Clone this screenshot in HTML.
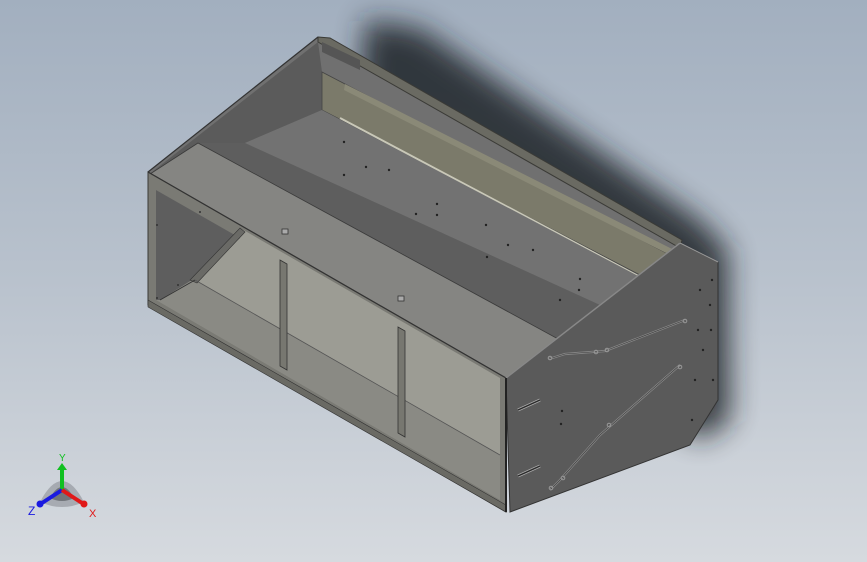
<!DOCTYPE html>
<html><head><meta charset="utf-8"><style>
html,body{margin:0;padding:0;}
body{width:867px;height:562px;overflow:hidden;background:linear-gradient(180deg,#a2afbf 0%,#b9c2cd 50%,#d6dadf 100%);font-family:"Liberation Sans",sans-serif;}
svg{position:absolute;left:0;top:0;}
</style></head><body>
<svg width="867" height="562" viewBox="0 0 867 562">
<defs>
<filter id="bl" x="-20%" y="-20%" width="140%" height="140%"><feGaussianBlur stdDeviation="14"/></filter>
<filter id="bl2"><feGaussianBlur stdDeviation="1.2"/></filter>
</defs>
<!-- shadow -->
<polygon points="365,20 420,28 700,220 728,250 730,420 700,440 560,330 360,90" fill="#1e2126" opacity="0.85" filter="url(#bl)"/>
<!-- top region base -->
<polygon points="148,172 318,37 680,243 506,378" fill="#707070"/>
<!-- back rail -->
<polygon points="318,37 330,38 682,240 680,248 318,42" fill="#6a6a62" stroke="#3a3a36" stroke-width="1"/>
<polygon points="322,42 360,60 360,70 322,52" fill="#555"/>
<!-- left inner wall (dark) -->
<polygon points="152,172 318,42 322,72 322,110 245,143 198,143" fill="#5b5b5b"/>
<!-- back olive plate -->
<polygon points="322,72 345,84 670,255 675,262 640,275 322,110" fill="#7b7a6a" stroke="#444" stroke-width="0.8"/>
<polygon points="345,84 678,252 676,258 344,90" fill="#8a8977"/>
<line x1="340" y1="118" x2="640" y2="277" stroke="#c9c8b8" stroke-width="2"/>
<!-- floor upper area -->
<polygon points="245,143 322,110 640,277 600,305" fill="#727272"/>
<!-- dark band -->
<polygon points="198,143 245,143 600,305 560,340" fill="#5e5e5e"/>
<!-- front light strip -->
<polygon points="150,174 198,143 560,340 506,378" fill="#858582" stroke="#3a3a3a" stroke-width="0.8"/>
<!-- holes on top -->
<g fill="#222">
<circle cx="344" cy="142" r="1.2"/><circle cx="366" cy="167" r="1.2"/><circle cx="389" cy="170" r="1.2"/><circle cx="344" cy="175" r="1.2"/>
<circle cx="437" cy="204" r="1.2"/><circle cx="437" cy="215" r="1.2"/><circle cx="416" cy="214" r="1.2"/><circle cx="486" cy="225" r="1.2"/>
<circle cx="508" cy="245" r="1.2"/><circle cx="487" cy="257" r="1.2"/><circle cx="533" cy="250" r="1.2"/><circle cx="580" cy="279" r="1.2"/><circle cx="579" cy="290" r="1.2"/><circle cx="560" cy="300" r="1.2"/>
</g>
<rect x="282" y="229" width="6" height="5" fill="#aaa" stroke="#333" stroke-width="0.8"/>
<rect x="398" y="296" width="6" height="5" fill="#aaa" stroke="#333" stroke-width="0.8"/>
<!-- front face frame -->
<polygon points="148,172 506,378 506,512 148,305" fill="#7a7a74" stroke="#3a3a36" stroke-width="1"/>
<!-- interior opening -->
<polygon points="156,190 500,388 500,500 156,300" fill="#8a8a84"/>
<!-- back wall interior light -->
<polygon points="240,228 500,378 500,455 195,280" fill="#9c9c94"/>
<!-- left inner dark -->
<polygon points="156,190 240,238 195,278 160,300 156,300" fill="#5e5e5e"/>
<polygon points="240,228 245,232 197,283 190,280" fill="#6a6a66" stroke="#333" stroke-width="0.6"/>
<line x1="160" y1="300" x2="195" y2="280" stroke="#333" stroke-width="1"/>
<!-- floor line -->
<line x1="195" y1="280" x2="500" y2="455" stroke="#555" stroke-width="0.8"/>
<!-- bottom rail -->
<polygon points="148,300 506,505 506,512 148,307" fill="#6a6a64" stroke="#333" stroke-width="0.6"/>
<!-- posts -->
<polygon points="280,260 287,264 287,370 280,366" fill="#777770" stroke="#333" stroke-width="0.8"/>
<polygon points="398,327 405,331 405,437 398,433" fill="#777770" stroke="#333" stroke-width="0.8"/>
<!-- front top edge -->
<polyline points="148,172 506,378" fill="none" stroke="#333" stroke-width="1.2"/>
<polyline points="148,172 318,37" fill="none" stroke="#333" stroke-width="1.2"/>
<g fill="#333"><circle cx="157" cy="225" r="1"/><circle cx="200" cy="212" r="1"/><circle cx="178" cy="285" r="1"/><circle cx="157" cy="298" r="1"/></g>
<!-- right end panel -->
<polygon points="506,378 680,243 718,262 718,400 690,445 510,512" fill="#5a5a5a" stroke="#333" stroke-width="1"/>
<polyline points="506,378 680,243" fill="none" stroke="#888" stroke-width="1.5"/>
<polyline points="680,243 718,262" fill="none" stroke="#999" stroke-width="1"/>
<line x1="506" y1="378" x2="506" y2="512" stroke="#222" stroke-width="2"/>
<!-- straps -->
<polyline points="549,359 565,354 605,351 685,320" fill="none" stroke="#888" stroke-width="2.2"/>
<polyline points="549,359 565,354 605,351 685,320" fill="none" stroke="#3a3a3a" stroke-width="0.6"/>
<polyline points="550,490 560,480 600,435 680,365" fill="none" stroke="#888" stroke-width="2.2"/>
<polyline points="550,490 560,480 600,435 680,365" fill="none" stroke="#3a3a3a" stroke-width="0.6"/>
<g fill="none" stroke="#999" stroke-width="1"><circle cx="550" cy="358" r="1.8"/><circle cx="596" cy="352" r="1.8"/><circle cx="607" cy="350" r="1.8"/><circle cx="685" cy="321" r="1.8"/><circle cx="680" cy="367" r="1.8"/><circle cx="609" cy="425" r="1.8"/><circle cx="563" cy="478" r="1.8"/><circle cx="551" cy="488" r="1.8"/></g>
<line x1="518" y1="410" x2="540" y2="400" stroke="#aaa" stroke-width="3"/>
<line x1="518" y1="410" x2="540" y2="400" stroke="#2a2a2a" stroke-width="1.5"/>
<line x1="518" y1="476" x2="540" y2="466" stroke="#aaa" stroke-width="3"/>
<line x1="518" y1="476" x2="540" y2="466" stroke="#2a2a2a" stroke-width="1.5"/>
<g fill="#222"><circle cx="700" cy="290" r="1.2"/><circle cx="712" cy="280" r="1.2"/><circle cx="710" cy="305" r="1.2"/><circle cx="698" cy="330" r="1.2"/><circle cx="711" cy="330" r="1.2"/><circle cx="703" cy="350" r="1.2"/><circle cx="713" cy="380" r="1.2"/><circle cx="695" cy="380" r="1.2"/><circle cx="692" cy="420" r="1.2"/><circle cx="562" cy="411" r="1.2"/><circle cx="561" cy="424" r="1.2"/></g>
<!-- axis triad -->
<g transform="translate(62,490)">
<path d="M-22,12 Q0,-30 22,12 Q0,22 -22,12Z" fill="#8c9096" opacity="0.6"/>
<path d="M-12,8 Q0,-14 12,8 Q0,14 -12,8Z" fill="#5a5e64" opacity="0.7"/>
<line x1="0" y1="0" x2="0" y2="-22" stroke="#10c020" stroke-width="4"/>
<path d="M-5,-20 L0,-27 L5,-20Z" fill="#10c020"/>
<line x1="0" y1="0" x2="-20" y2="13" stroke="#1a1ae0" stroke-width="4"/>
<circle cx="-22" cy="14" r="3.5" fill="#1a1ae0"/>
<line x1="0" y1="0" x2="20" y2="13" stroke="#e01818" stroke-width="4"/>
<circle cx="22" cy="14" r="3.5" fill="#e01818"/>
<text x="-3" y="-29" font-size="10" fill="#10c020" font-family="Liberation Sans">Y</text>
<text x="-34" y="25" font-size="12" fill="#1a1ae0" font-family="Liberation Sans">Z</text>
<text x="27" y="27" font-size="11" fill="#e01818" font-family="Liberation Sans">X</text>
</g>
</svg>
</body></html>
